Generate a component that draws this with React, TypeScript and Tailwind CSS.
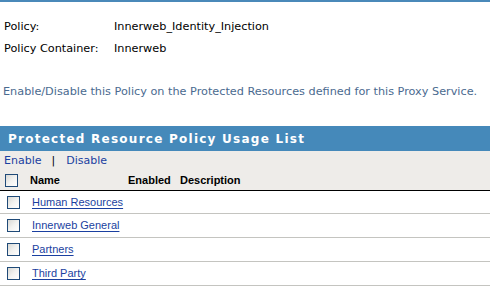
import React from "react";

const font = { fontFamily: '"DejaVu Sans", Verdana, sans-serif' };
const lib = { fontFamily: '"Liberation Sans", Arial, sans-serif' };

function Box({ className = "" }: { className?: string }) {
  return (
    <span
      className={`inline-block w-[13px] h-[13px] border border-[#1f4a78] bg-gradient-to-br from-[#d8d8d4] via-[#f2f2f0] to-white ${className}`}
    />
  );
}

export default function App() {
  const rows = ["Human Resources", "Innerweb General", "Partners", "Third Party"];
  return (
    <div className="w-[490px] h-[286px] bg-white overflow-hidden text-[11.25px] text-black" style={font}>
      <div className="h-[2px] bg-[#4a89b9]" />
      <div className="pt-[14px] pl-[4px]">
        <div className="flex h-[22px] items-center">
          <span className="w-[110px]">Policy:</span>
          <span>Innerweb_Identity_Injection</span>
        </div>
        <div className="flex h-[22px] items-center">
          <span className="w-[110px]">Policy Container:</span>
          <span>Innerweb</span>
        </div>
      </div>
      <div className="mt-[21px] pl-[3px] text-[#4a6a8f] h-[22px] flex items-center">
        Enable/Disable this Policy on the Protected Resources defined for this Proxy Service.
      </div>
      <div className="mt-[23px] h-[25px] bg-[#4589ba] text-white font-bold text-[12px] tracking-[1.25px] pl-[8px] flex items-center">
        Protected Resource Policy Usage List
      </div>
      <div className="bg-[#eeece9] h-[40px] border-b border-black">
        <div className="flex items-center h-[20px] pl-[4px] text-[11px] text-[#1a3fa0]">
          <span>Enable</span>
          <span className="ml-[10px] mr-[11px] text-black">|</span>
          <span>Disable</span>
        </div>
        <div className="flex items-center h-[18px] font-bold text-[11px]" style={lib}>
          <Box className="ml-[5px]" />
          <span className="ml-[12px] w-[98px]">Name</span>
          <span className="w-[52px]">Enabled</span>
          <span>Description</span>
        </div>
      </div>
      {rows.map((r, i) => (
        <div
          key={r}
          className={`flex items-center ${i === 0 ? "h-[23px]" : "h-[24px]"} border-b border-[#c4c4c0]`}
        >
          <Box className="ml-[7px]" />
          <a className="ml-[12px] text-[11px] text-[#1a3fa0] underline underline-offset-2" style={lib}>
            {r}
          </a>
        </div>
      ))}
    </div>
  );
}
